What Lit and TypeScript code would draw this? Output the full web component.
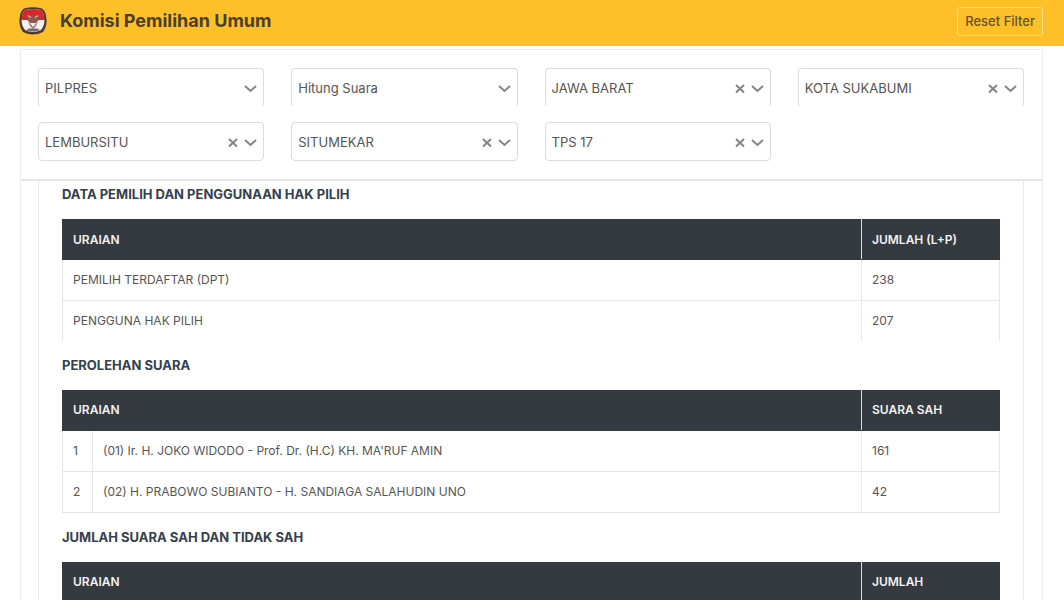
import { LitElement, html, css, svg, nothing } from "lit";
import { customElement, property } from "lit/decorators.js";

interface Filter {
  id: string;
  label: string;
  value: string;
  clearable: boolean;
}

interface Section {
  title: string;
  amountLabel: string;
  numbered: boolean;
  open: boolean;
  rows: [string, string][];
}

const FILTERS: Filter[] = [
  { id: "pemilihan", label: "Pemilihan", value: "PILPRES", clearable: false },
  { id: "tahap", label: "Tahap", value: "Hitung Suara", clearable: false },
  { id: "provinsi", label: "Provinsi", value: "JAWA BARAT", clearable: true },
  { id: "kota", label: "Kabupaten/Kota", value: "KOTA SUKABUMI", clearable: true },
  { id: "kecamatan", label: "Kecamatan", value: "LEMBURSITU", clearable: true },
  { id: "kelurahan", label: "Kelurahan", value: "SITUMEKAR", clearable: true },
  { id: "tps", label: "TPS", value: "TPS 17", clearable: true },
];

const SECTIONS: Section[] = [
  {
    title: "DATA PEMILIH DAN PENGGUNAAN HAK PILIH",
    amountLabel: "JUMLAH (L+P)",
    numbered: false,
    open: true,
    rows: [
      ["PEMILIH TERDAFTAR (DPT)", "238"],
      ["PENGGUNA HAK PILIH", "207"],
    ],
  },
  {
    title: "PEROLEHAN SUARA",
    amountLabel: "SUARA SAH",
    numbered: true,
    open: false,
    rows: [
      ["(01) Ir. H. JOKO WIDODO - Prof. Dr. (H.C) KH. MA'RUF AMIN", "161"],
      ["(02) H. PRABOWO SUBIANTO - H. SANDIAGA SALAHUDIN UNO", "42"],
    ],
  },
  {
    title: "JUMLAH SUARA SAH DAN TIDAK SAH",
    amountLabel: "JUMLAH",
    numbered: false,
    open: false,
    rows: [],
  },
];

const emblem = svg`
  <path d="M5 1.5 Q14 -1 23 1.5 Q26.5 4 27 9 Q29 18 24 25 Q14 30 4 25 Q-1 18 1 9 Q1.500 4 5 1.500Z" fill="#4b3a35"/>
  <path d="M6 3 Q14 1 22 3 Q24.500 5 25 10 Q26.500 18 22 23 Q14 27 6 23 Q1.500 18 3 10 Q3.500 5 6 3Z" fill="#f4efec"/>
  <path d="M6 3 Q14 1 22 3 Q24.500 5 25 10 L25.500 13 L20 13 L14 15 L8 13 L2.500 13 L3 10 Q3.500 5 6 3Z" fill="#d7282d"/>
  <path d="M8 8 L12 10 L14 8.500 L16 10 L20 8 L19.500 13 L17 16 H11 L8.500 13Z" fill="#8a5a4c"/>
  <path d="M9 8.500 L12 10.500 M19 8.500 L16 10.500" stroke="#d9b3a4" stroke-width="1.300" fill="none"/>
  <path d="M9 14 L14 20 L19 14 L17 19 L14 22 L11 19Z" fill="#8d7c75"/>
  <path d="M7 23 L10 21.500 H18 L21 23 Q14 26 7 23Z" fill="#7a6a64"/>`;

@customElement("filter-select")
class FilterSelect extends LitElement {
  @property({ attribute: false }) filter!: Filter;
  @property({ type: Boolean, reflect: true }) open = false;

  static styles = css`
    :host {
      display: block;
    }
    .box {
      display: grid;
      grid-template-columns: 1fr auto auto;
      align-items: center;
      box-sizing: border-box;
      height: 39px;
      border: 1px solid #dcdcdc;
      border-radius: 4px;
      background: #fff;
      color: #858585;
    }
    :host([open]) .box {
      border-bottom-color: transparent;
    }
    select {
      grid-area: 1 / 1 / 2 / 4;
      width: 100%;
      height: 100%;
      padding: 0 52px 0 6px;
      border: 0;
      border-radius: 4px;
      appearance: none;
      background: transparent;
      color: #555;
      font: 13px/20px Inter, sans-serif;
    }
    .clear {
      grid-area: 1 / 2;
      display: flex;
      padding: 4px 2px;
      border: 0;
      background: none;
      color: inherit;
    }
    .chevron {
      grid-area: 1 / 3;
      padding: 4px 6px 4px 4px;
      pointer-events: none;
    }
    svg {
      display: block;
    }
    path {
      fill: none;
      stroke: currentColor;
      stroke-width: 2;
    }
  `;

  render() {
    const f = this.filter;
    return html`<div class="box">
      <select id=${f.id} aria-label=${f.label}>
        <option selected>${f.value}</option>
      </select>
      ${f.clearable
        ? html`<button class="clear" type="button" aria-label="Hapus">
            <svg width="10" height="12" viewBox="0 0 10 12"><path d="M1 3 L9 10.500 M9 3 L1 10.500" /></svg>
          </button>`
        : nothing}
      <svg class="chevron" width="13" height="12" viewBox="0 0 13 12"><path d="M1 4 L6.500 9 L12 4" /></svg>
    </div>`;
  }
}

@customElement("app-root")
class AppRoot extends LitElement {
  static styles = css`
    :host {
      display: flex;
      flex-direction: column;
      min-height: 100vh;
      background: #fff;
      color: #555;
      font: 12px/20px Inter, sans-serif;
    }
    header {
      display: flex;
      align-items: center;
      justify-content: space-between;
      box-sizing: border-box;
      height: 46px;
      padding: 0 21px 4px 19px;
      background: #fdc029;
    }
    .brand {
      display: flex;
      align-items: center;
      gap: 13px;
    }
    h1 {
      margin: 0;
      color: #4a3f2b;
      font-size: 18px;
      font-weight: 700;
      line-height: 24px;
    }
    .reset {
      box-sizing: border-box;
      height: 29px;
      padding: 0 7px;
      border: 1px solid #fee094;
      border-radius: 3px;
      background: transparent;
      color: #685223;
      font: 500 13px/20px Inter, sans-serif;
    }
    main {
      display: flex;
      flex: 1;
      flex-direction: column;
      margin: 3px 21px 0 20px;
      border: solid #ececec;
      border-width: 1px 1px 0;
    }
    .filters {
      display: grid;
      grid-template-columns: repeat(4, 1fr);
      gap: 15px 27px;
      padding: 18px 18px 18px 17px;
      border-bottom: 2px solid #e6e6e6;
    }
    .results {
      flex: 1;
      margin: 0 18px 0 17px;
      padding: 0 23px;
      border: solid #e9e9e9;
      border-width: 0 1px;
    }
    h2 {
      margin: 0;
      padding: 14px 0 15px;
      color: #34404e;
      font-size: 13px;
      font-weight: 700;
      line-height: 20px;
    }
    section:first-child h2 {
      padding-top: 3px;
    }
    table {
      width: 100%;
      border-collapse: collapse;
      table-layout: fixed;
    }
    .number {
      width: 30px;
    }
    .amount {
      width: 138px;
    }
    th,
    td {
      box-sizing: border-box;
      height: 41px;
      padding: 0 11px;
      border: 1px solid #e6e6e6;
      text-align: left;
      font-size: 12px;
      line-height: 20px;
    }
    td {
      padding-left: 10px;
    }
    th {
      height: 40px;
      padding-left: 10px;
      border-color: #343a40;
      background: #343a40;
      color: #f2f2f2;
      font-weight: 600;
    }
    th:first-child {
      border-right-color: #d9dadb;
    }
    .open tr:last-child td {
      height: 40px;
      border-bottom: 0;
    }
  `;

  private renderSection(s: Section) {
    return html`<section>
      <h2>${s.title}</h2>
      <table class=${s.open ? "open" : "closed"}>
        <colgroup>
          ${s.numbered ? html`<col class="number" />` : nothing}
          <col />
          <col class="amount" />
        </colgroup>
        <thead>
          <tr>
            <th scope="col" colspan=${s.numbered ? 2 : 1}>URAIAN</th>
            <th scope="col">${s.amountLabel}</th>
          </tr>
        </thead>
        <tbody>
          ${s.rows.map(
            ([name, amount], i) => html`<tr>
              ${s.numbered ? html`<td>${i + 1}</td>` : nothing}
              <td>${name}</td>
              <td>${amount}</td>
            </tr>`
          )}
        </tbody>
      </table>
    </section>`;
  }

  render() {
    return html`
      <header>
        <div class="brand">
          <svg width="28" height="28" viewBox="0 0 28 28" aria-hidden="true">${emblem}</svg>
          <h1>Komisi Pemilihan Umum</h1>
        </div>
        <button class="reset" type="button">Reset Filter</button>
      </header>
      <main>
        <div class="filters">
          ${FILTERS.map((f, i) => html`<filter-select .filter=${f} ?open=${i < 4}></filter-select>`)}
        </div>
        <div class="results">${SECTIONS.map((s) => this.renderSection(s))}</div>
      </main>
    `;
  }
}
